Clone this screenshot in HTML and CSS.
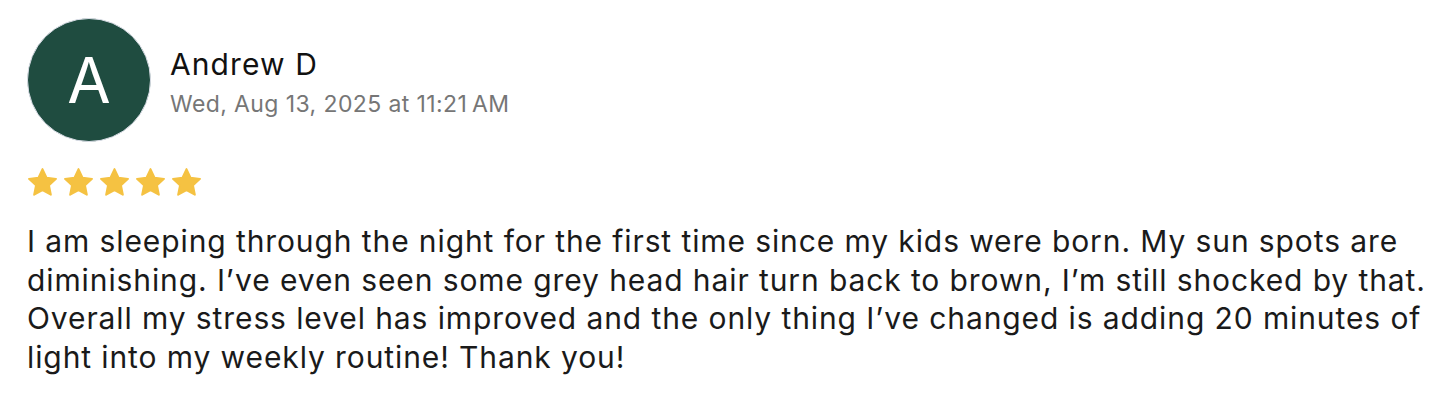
FILE: index.html
```html
<!DOCTYPE html>
<html>
<head>
<meta charset="utf-8">
<link rel="stylesheet" href="styles.css">
</head>
<body>
<div class="review">
  <div class="header">
    <div class="avatar">A</div>
    <div class="meta">
      <div class="name">Andrew D</div>
      <div class="date">Wed, Aug 13, 2025 at 11:21&#8239;AM</div>
    </div>
  </div>
  <div class="stars">
    <svg class="star" viewBox="0 0 24 24"><path d="M12 1.6L15.12 8.31 22.46 9.2 17.04 14.24 18.47 21.5 12 17.9 5.53 21.5 6.96 14.24 1.54 9.2 8.88 8.31Z"/></svg>
    <svg class="star" viewBox="0 0 24 24"><path d="M12 1.6L15.12 8.31 22.46 9.2 17.04 14.24 18.47 21.5 12 17.9 5.53 21.5 6.96 14.24 1.54 9.2 8.88 8.31Z"/></svg>
    <svg class="star" viewBox="0 0 24 24"><path d="M12 1.6L15.12 8.31 22.46 9.2 17.04 14.24 18.47 21.5 12 17.9 5.53 21.5 6.96 14.24 1.54 9.2 8.88 8.31Z"/></svg>
    <svg class="star" viewBox="0 0 24 24"><path d="M12 1.6L15.12 8.31 22.46 9.2 17.04 14.24 18.47 21.5 12 17.9 5.53 21.5 6.96 14.24 1.54 9.2 8.88 8.31Z"/></svg>
    <svg class="star" viewBox="0 0 24 24"><path d="M12 1.6L15.12 8.31 22.46 9.2 17.04 14.24 18.47 21.5 12 17.9 5.53 21.5 6.96 14.24 1.54 9.2 8.88 8.31Z"/></svg>
  </div>
  <p class="body">I am sleeping through the night for the first time since my kids were born. My sun spots are diminishing. I’ve even seen some grey head hair turn back to brown, I’m still shocked by that. Overall my stress level has improved and the only thing I’ve changed is adding 20 minutes of light into my weekly routine! Thank you!</p>
</div>
</body>
</html>
```

FILE: styles.css
```css
html, body {
  margin: 0;
  padding: 0;
  background: #ffffff;
}
body {
  font-family: "Inter", "Liberation Sans", sans-serif;
  color: #1a1a1a;
}
.review {
  padding: 18px 10px 0 27px;
}
.header {
  display: flex;
  align-items: flex-start;
  gap: 19px;
}
.avatar {
  width: 122px;
  height: 122px;
  border-radius: 50%;
  background: #1f4c40;
  border: 1px solid #d9dde6;
  color: #ffffff;
  display: flex;
  align-items: center;
  justify-content: center;
  font-size: 63px;
  font-weight: 400;
  flex: none;
}
.meta {
  display: flex;
  flex-direction: column;
  gap: 8px;
  padding-top: 28px;
}
.name {
  font-size: 30px;
  line-height: 36px;
  letter-spacing: 1.1px;
  color: #111111;
}
.date {
  font-size: 23px;
  line-height: 28px;
  letter-spacing: 0.4px;
  color: #767676;
}
.stars {
  display: flex;
  gap: 5px;
  margin-top: 25px;
}
.star {
  width: 31px;
  height: 31px;
  fill: #f5c242;
  stroke: #f5c242;
  stroke-width: 1.5;
  stroke-linejoin: round;
}
.body {
  margin: 24px 0 0 0;
  font-size: 30px;
  line-height: 38.7px;
  letter-spacing: 0.9px;
  color: #1a1a1a;
}
```
